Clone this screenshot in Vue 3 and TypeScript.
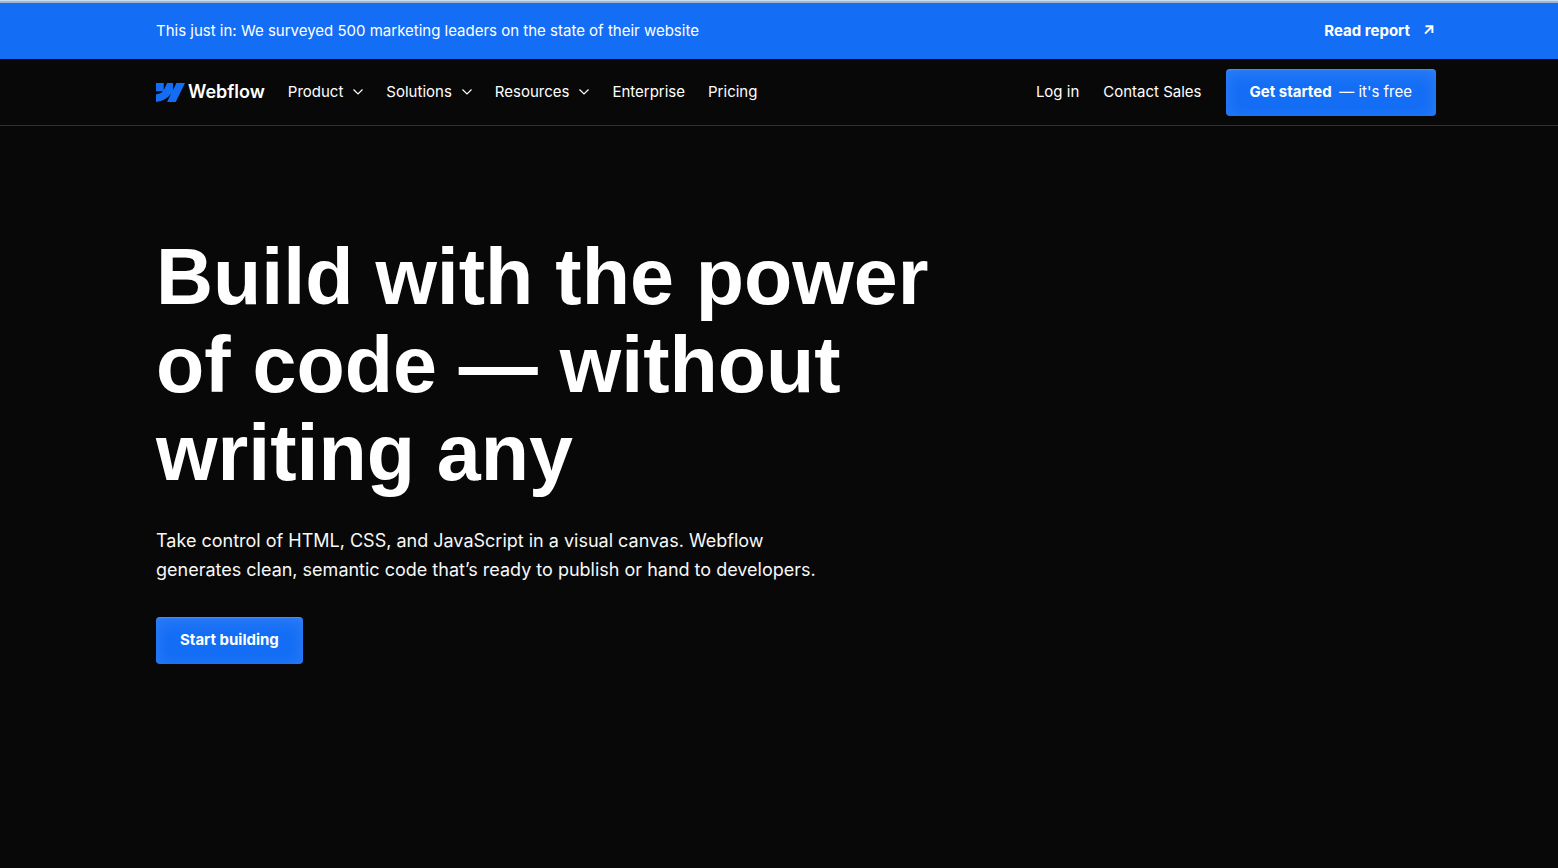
<script setup lang="ts">
interface NavItem {
  label: string
  menu: boolean
}

const navItems: NavItem[] = [
  { label: 'Product', menu: true },
  { label: 'Solutions', menu: true },
  { label: 'Resources', menu: true },
  { label: 'Enterprise', menu: false },
  { label: 'Pricing', menu: false },
]
</script>

<template>
  <div class="page">
    <aside class="banner">
      <span>This just in: We surveyed 500 marketing leaders on the state of their website</span>
      <a class="report" href="#report">
        Read report
        <svg width="10" height="10" viewBox="0 0 10 10" fill="none" stroke="currentColor" stroke-width="2" aria-hidden="true">
          <path d="M1.5 1.2H8.4V8M8.4 1.2L1 8.6" />
        </svg>
      </a>
    </aside>

    <header class="header">
      <a class="logo" href="#home">
        <svg width="29" height="19" viewBox="0 0 1080 674" preserveAspectRatio="none" fill="#146ef5" aria-hidden="true">
          <path d="M1080 0L735.386 673.684H411.695L555.916 394.481H549.445C430.464 548.934 252.942 650.61 0 673.684V398.344C0 398.344 161.813 388.787 256.938 288.776H0V0H288.771V237.515L295.252 237.489L413.255 0H631.645V236.009L638.126 235.999L760.556 0H1080Z" />
        </svg>
        <span>Webflow</span>
      </a>
      <nav class="nav">
        <template v-for="item in navItems" :key="item.label">
          <button v-if="item.menu" type="button" class="link">
            {{ item.label }}
            <svg width="10" height="6" viewBox="0 0 10 6" fill="none" stroke="currentColor" stroke-width="1.2" aria-hidden="true">
              <path d="M0.5 0.5L5 5L9.5 0.5" />
            </svg>
          </button>
          <a v-else class="link" :href="'#' + item.label.toLowerCase()">{{ item.label }}</a>
        </template>
      </nav>
      <div class="account">
        <a class="link" href="#login">Log in</a>
        <a class="link" href="#sales">Contact Sales</a>
        <a class="button" href="#signup">Get started <span class="light">— it's free</span></a>
      </div>
    </header>

    <main class="hero">
      <h1>Build with the power<br />of code — without<br />writing any</h1>
      <p>
        Take control of HTML, CSS, and JavaScript in a visual canvas. Webflow<br />
        generates clean, semantic code that’s ready to publish or hand to developers.
      </p>
      <a class="button" href="#build">Start building</a>
    </main>
  </div>
</template>

<style>
body {
  margin: 0;
  background: #080808;
}
</style>

<style scoped>
.page {
  min-height: 100vh;
  box-sizing: border-box;
  background: #080808;
  border-top: 1px solid #c9dcf8;
  color: #fff;
  font-family: Inter, 'Liberation Sans', sans-serif;
  font-size: 15px;
  line-height: 24px;
}

.banner,
.header,
.hero {
  padding-left: 156px;
  padding-right: 122px;
}

.banner {
  display: flex;
  justify-content: space-between;
  align-items: center;
  height: 56px;
  border-top: 2px solid #a5b5ca;
  background: #146ef5;
}

a {
  color: inherit;
  text-decoration: none;
}

.report {
  display: flex;
  align-items: center;
  gap: 14px;
  padding-right: 2px;
  font-weight: 700;
}

.report svg {
  margin-bottom: 3px;
}

.header {
  display: flex;
  align-items: center;
  height: 66px;
  border-bottom: 1px solid #303030;
}

.logo {
  display: flex;
  align-items: center;
  gap: 3px;
  margin-right: 23px;
  font-size: 18px;
  font-weight: 600;
}

.nav {
  display: flex;
  align-items: center;
  gap: 23px;
}

.account {
  display: flex;
  align-items: center;
  gap: 24px;
  margin-left: auto;
}

.link {
  display: flex;
  align-items: center;
  gap: 10px;
  padding: 0;
  border: 0;
  background: none;
  color: #fff;
  font: inherit;
}

.button {
  display: inline-block;
  padding: 11px 24px 12px;
  border-radius: 4px;
  background: #146ef5;
  box-shadow:
    inset 0 1px 1px rgba(255, 255, 255, 0.16),
    inset 0 4px 16px rgba(255, 255, 255, 0.12);
  font-weight: 700;
}

.light {
  margin-left: 4px;
  font-weight: 400;
}

.hero {
  padding-top: 107px;
}

h1 {
  margin: 0;
  font-family: 'Liberation Sans', Arial, sans-serif;
  font-size: 79px;
  font-weight: 700;
  line-height: 88px;
}

p {
  margin: 29px 0 33px;
  color: #f8f8f8;
  font-size: 18px;
  line-height: 29px;
}
</style>
